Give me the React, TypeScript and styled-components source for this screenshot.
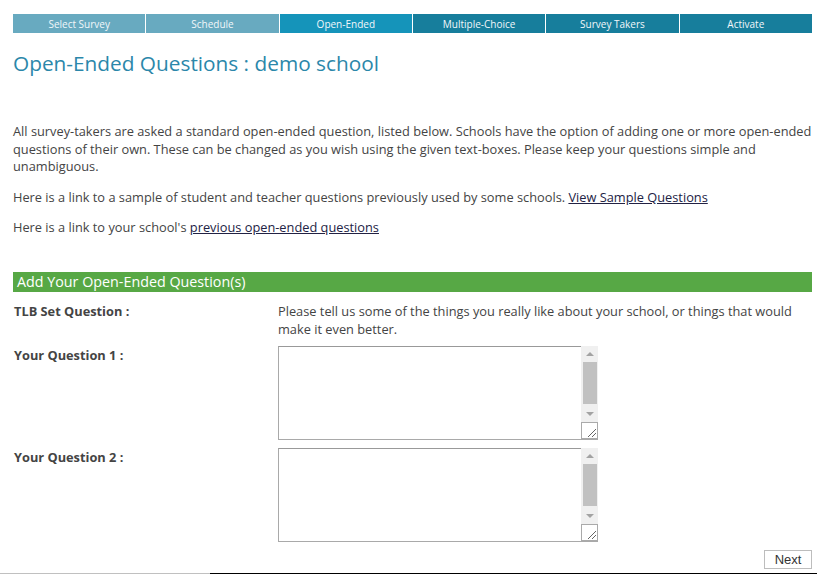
import React from 'react';
import styled, { createGlobalStyle } from 'styled-components';

const GlobalStyle = createGlobalStyle`
  html, body {
    margin: 0;
    padding: 0;
    background: #ffffff;
  }
  body {
    font-family: 'Open Sans', 'Noto Sans', sans-serif;
    color: #444444;
  }
`;

const Page = styled.div`
  width: 817px;
  height: 574px;
  box-sizing: border-box;
  padding: 14px 5px 0 13px;
  position: relative;
  overflow: hidden;
`;

const StepBar = styled.nav`
  display: flex;
  gap: 1px;
  height: 19px;
`;

const Step = styled.div<{ $state: 'done' | 'active' | 'todo' }>`
  flex: 1;
  display: flex;
  align-items: center;
  justify-content: center;
  font-size: 10px;
  color: #f2f7fa;
  background: ${(p) =>
    p.$state === 'done' ? '#68aac0' : p.$state === 'active' ? '#1594ba' : '#177e9c'};
`;

const Title = styled.h1`
  margin: 15px 0 0;
  font-size: 20.8px;
  font-weight: 400;
  line-height: 30px;
  color: #2b87aa;
`;

const Intro = styled.div`
  margin-top: 45px;
`;

const Para = styled.p`
  margin: 0 0 13px;
  font-size: 12.8px;
  line-height: 17.6px;
  color: #444444;
`;

const Link = styled.a`
  color: #222244;
  text-decoration: underline;
`;

const SectionHeader = styled.div`
  margin-top: 35px;
  height: 20px;
  background: #57a845;
  color: #ffffff;
  font-size: 14.3px;
  line-height: 20px;
  padding-left: 4px;
`;

const Form = styled.div`
  display: grid;
  grid-template-columns: 265px 1fr;
  row-gap: 8px;
  padding-top: 10px;
`;

const Label = styled.div`
  font-size: 12.8px;
  font-weight: 700;
  line-height: 18px;
  padding-left: 1px;
`;

const Value = styled.div`
  font-size: 12.8px;
  line-height: 18px;
`;

const BoxFrame = styled.div`
  display: flex;
  width: 320px;
  height: 94px;
  box-sizing: border-box;
  border: 1px solid #a9a9a9;
  border-top-color: #999999;
  border-right: 0;
`;

const Field = styled.textarea`
  flex: 1;
  min-width: 0;
  border: 0;
  outline: none;
  padding: 2px;
  margin: 0;
  resize: none;
  font-family: inherit;
  font-size: 13px;
  background: #ffffff;
`;

const ScrollRail = styled.div`
  width: 17px;
  display: flex;
  flex-direction: column;
  background: #f0f0f0;
  margin-top: -1px;
`;

const RailButton = styled.div<{ $dir: 'up' | 'down' }>`
  height: 16px;
  flex-shrink: 0;
  display: flex;
  align-items: center;
  justify-content: center;

  &::before {
    content: '';
    width: 0;
    height: 0;
    border-left: 4px solid transparent;
    border-right: 4px solid transparent;
    ${(p) =>
      p.$dir === 'up' ? 'border-bottom: 4px solid #a3a3a3;' : 'border-top: 4px solid #a3a3a3;'}
  }
`;

const Thumb = styled.div`
  height: 42px;
  margin: 0 1px 0 2px;
  background: #c1c1c1;
`;

const RailSpace = styled.div`
  flex: 1;
`;

const Grip = styled.div`
  height: 17px;
  box-sizing: border-box;
  background: #ffffff;
  border: 1px solid #aaaaaa;
  display: flex;
  align-items: flex-end;
  justify-content: flex-end;
`;

const Footer = styled.div`
  display: flex;
  justify-content: flex-end;
  margin-top: 8px;
`;

const NextButton = styled.button`
  width: 48px;
  height: 19px;
  padding: 0;
  background: #ffffff;
  border: 1px solid #bdbdbd;
  color: #333333;
  font-family: 'Liberation Sans', Arial, sans-serif;
  font-size: 13px;
`;

const BottomEdge = styled.div`
  position: absolute;
  left: 0;
  right: 0;
  bottom: 0;
  height: 1px;
  display: flex;
`;

const EdgePart = styled.div<{ $w?: number; $c: string }>`
  ${(p) => (p.$w ? `width: ${p.$w}px;` : 'flex: 1;')}
  background: ${(p) => p.$c};
`;

const steps: { label: string; state: 'done' | 'active' | 'todo' }[] = [
  { label: 'Select Survey', state: 'done' },
  { label: 'Schedule', state: 'done' },
  { label: 'Open-Ended', state: 'active' },
  { label: 'Multiple-Choice', state: 'todo' },
  { label: 'Survey Takers', state: 'todo' },
  { label: 'Activate', state: 'todo' },
];

const QuestionBox = () => (
  <BoxFrame>
    <Field />
    <ScrollRail>
      <RailButton $dir="up" />
      <Thumb />
      <RailSpace />
      <RailButton $dir="down" />
      <Grip>
        <svg width="12" height="12" viewBox="0 0 12 12">
          <path d="M3 11 L11 3 M7 11 L11 7" stroke="#666" strokeWidth="1" />
        </svg>
      </Grip>
    </ScrollRail>
  </BoxFrame>
);

const App = () => (
  <Page>
    <GlobalStyle />
    <StepBar>
      {steps.map((s) => (
        <Step key={s.label} $state={s.state}>
          {s.label}
        </Step>
      ))}
    </StepBar>
    <Title>Open-Ended Questions : demo school</Title>
    <Intro>
      <Para>
        All survey-takers are asked a standard open-ended question, listed below. Schools have the
        option of adding one or more open-ended questions of their own. These can be changed as you
        wish using the given text-boxes. Please keep your questions simple and unambiguous.
      </Para>
      <Para>
        Here is a link to a sample of student and teacher questions previously used by some
        schools. <Link href="#">View Sample Questions</Link>
      </Para>
      <Para>
        Here is a link to your school's <Link href="#">previous open-ended questions</Link>
      </Para>
    </Intro>
    <SectionHeader>Add Your Open-Ended Question(s)</SectionHeader>
    <Form>
      <Label>TLB Set Question :</Label>
      <Value>
        Please tell us some of the things you really like about your school, or things that would
        make it even better.
      </Value>
      <Label>Your Question 1 :</Label>
      <Value>
        <QuestionBox />
      </Value>
      <Label>Your Question 2 :</Label>
      <Value>
        <QuestionBox />
      </Value>
    </Form>
    <Footer>
      <NextButton>Next</NextButton>
    </Footer>
    <BottomEdge>
      <EdgePart $w={210} $c="#c0c0c0" />
      <EdgePart $c="#000000" />
    </BottomEdge>
  </Page>
);

export default App;
